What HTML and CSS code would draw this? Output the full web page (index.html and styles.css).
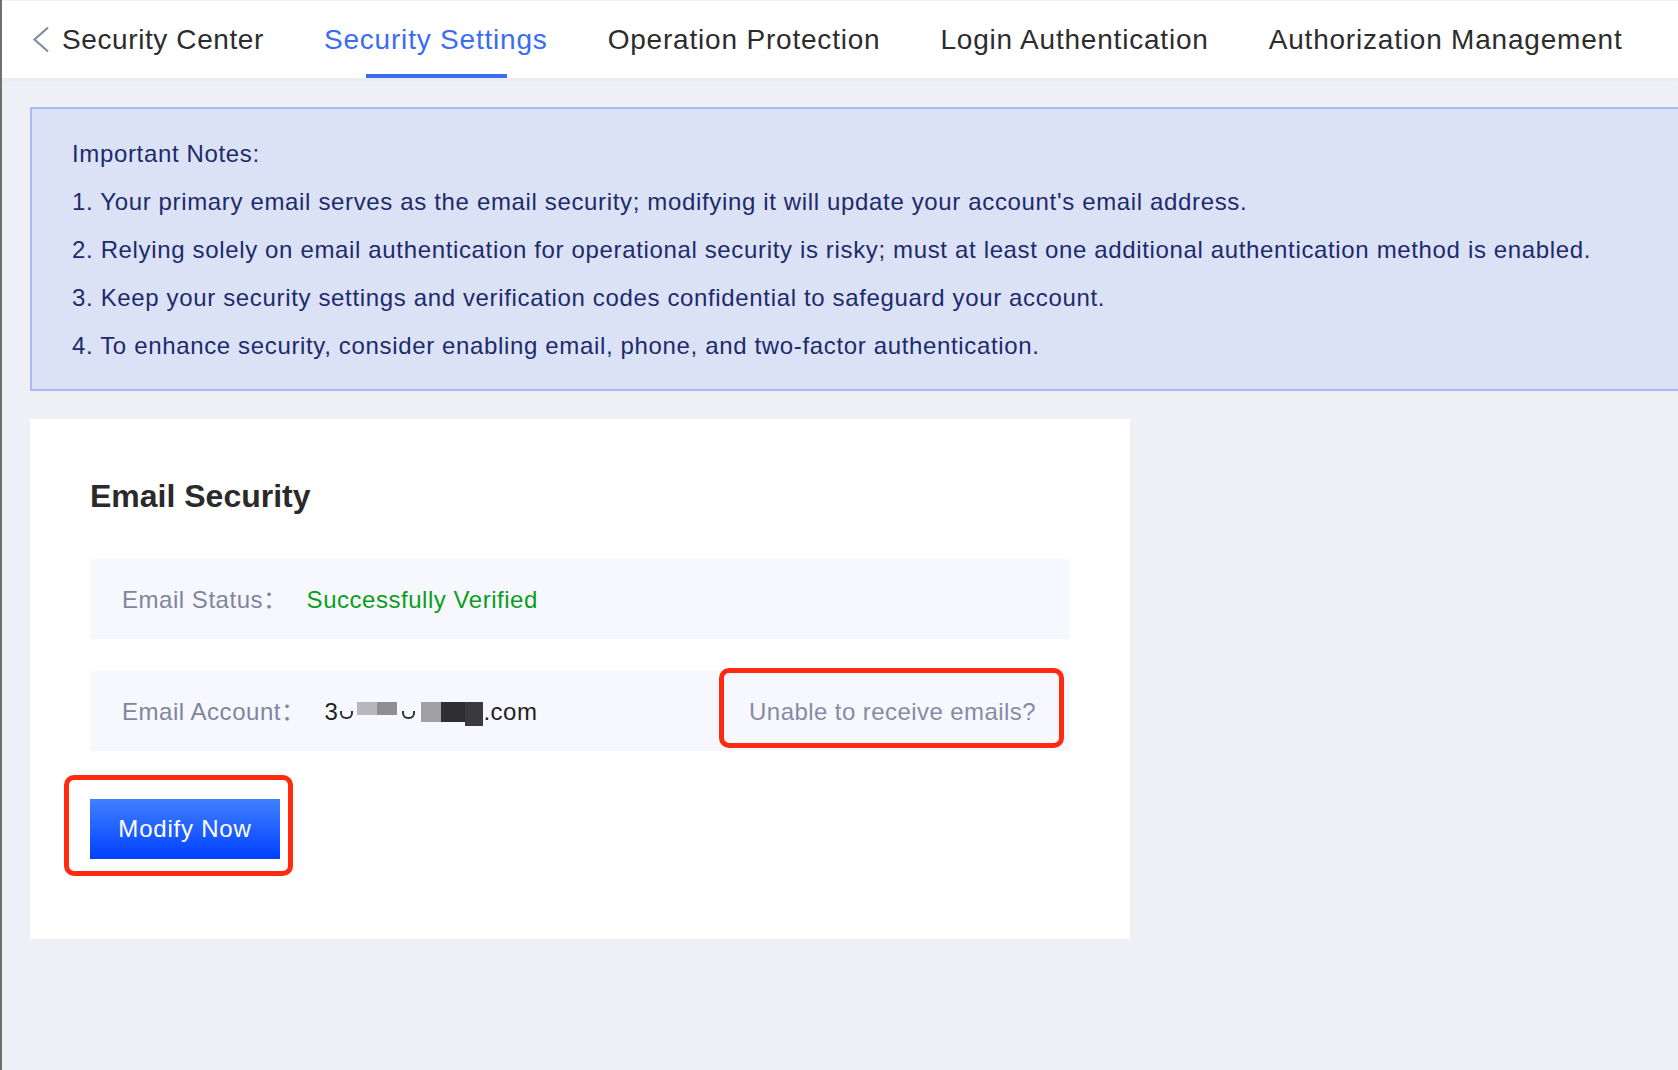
FILE: index.html
```html
<!DOCTYPE html>
<html lang="en">

<head>
    <meta charset="UTF-8">
    <title>Security Settings</title>
    <link rel="stylesheet" href="styles.css">
</head>

<body>
    <div class="top-nav">
        <a class="back-link" href="#">
            <svg class="back-icon" viewBox="0 0 18 27">
                <polyline points="16,1.5 2.5,13.5 16,25.5" />
            </svg>
            <span>Security Center</span>
        </a>
        <a class="nav-item active" href="#">Security Settings</a>
        <a class="nav-item" href="#">Operation Protection</a>
        <a class="nav-item" href="#">Login Authentication</a>
        <a class="nav-item" href="#">Authorization Management</a>
    </div>

    <div class="content">
        <div class="notice">
            <p>Important Notes:</p>
            <p>1. Your primary email serves as the email security; modifying it will update your account's email address.</p>
            <p>2. Relying solely on email authentication for operational security is risky; must at least one additional authentication method is enabled.</p>
            <p>3. Keep your security settings and verification codes confidential to safeguard your account.</p>
            <p>4. To enhance security, consider enabling email, phone, and two-factor authentication.</p>
        </div>

        <div class="card">
            <h2 class="card-title">Email Security</h2>

            <div class="info-row">
                <span class="info-label">Email Status：</span>
                <span class="info-value verified">Successfully Verified</span>
            </div>

            <div class="info-row">
                <span class="info-label">Email Account：</span>
                <span class="info-value email">3<span class="half-char"></span><span class="mask m1"></span><span class="mask m2"></span><span class="half-char gap"></span><span class="mask m3"></span><span class="mask m4"></span><span class="mask m5"></span>.com</span>
                <a class="help-link" href="#">Unable to receive emails?</a>
            </div>

            <div class="actions">
                <button class="btn-primary">Modify Now</button>
            </div>
        </div>
    </div>
</body>

</html>
```

FILE: styles.css
```css
html,
body {
    margin: 0;
    overflow: hidden;
}

body {
    font-family: "Liberation Sans", Arial, "Noto Sans CJK SC", sans-serif;
    background-color: #eef0f5;
    border-left: 2px solid #6f6f6f;
    height: 1070px;
    letter-spacing: 0.53px;
}

a {
    text-decoration: none;
}

/* top tabs */
.top-nav {
    display: flex;
    gap: 60px;
    height: 78px;
    padding-left: 30px;
    background-color: #fff;
    border-top: 1px solid #f2f2f2;
    box-sizing: border-box;
    box-shadow: 0 2px 4px rgba(0, 0, 0, 0.03);
}

.back-link {
    display: flex;
    align-items: center;
    gap: 12px;
    font-size: 28px;
    letter-spacing: 0.6px;
    color: #2c2c2c;
}

.back-icon {
    width: 18px;
    height: 27px;
    fill: none;
    stroke: #858aa3;
    stroke-width: 2.2;
}

.nav-item {
    position: relative;
    display: flex;
    align-items: center;
    font-size: 28px;
    letter-spacing: 0.8px;
    color: #2c2c2c;
}

.nav-item.active {
    color: #3a6cf4;
}

.nav-item.active::after {
    content: '';
    position: absolute;
    bottom: 0;
    left: 50%;
    width: 141px;
    height: 4px;
    margin-left: -70px;
    background-color: #3a6cf4;
}

/* page body */
.content {
    width: 1720px;
    padding: 29px 0 0 28px;
}

.notice {
    padding: 21px 40px 19px;
    background-color: #dce2f6;
    border: 2px solid #a8bbf7;
    color: #1d2b6b;
    font-size: 24px;
    letter-spacing: 0.65px;
}

.notice p {
    margin: 0;
    line-height: 48px;
}

.card {
    width: 1100px;
    margin-top: 28px;
    padding: 55px 60px 80px;
    box-sizing: border-box;
    background-color: #fff;
}

.card-title {
    margin: 0 0 41px;
    font-size: 32px;
    line-height: 44px;
    font-weight: 700;
    letter-spacing: 0;
    color: #2a2a2a;
}

.info-row {
    display: flex;
    align-items: baseline;
    height: 80px;
    padding: 27px 34px 0 32px;
    box-sizing: border-box;
    background-color: #f6f8fd;
    font-size: 24px;
    line-height: 28px;
}

.info-row + .info-row {
    margin-top: 32px;
}

.info-label {
    color: #7f859f;
    margin-right: 19px;
}

.verified {
    color: #0b9e1c;
}

.email {
    color: #222;
}

.half-char {
    display: inline-block;
    width: 9px;
    height: 6px;
    margin: 0 4px 0 2px;
    border: 2px solid #333;
    border-top: none;
    border-radius: 0 0 6px 6px;
    vertical-align: 1px;
}

.half-char.gap {
    margin: 0 6px 0 5px;
}

.mask {
    display: inline-block;
    width: 20px;
    height: 13px;
    vertical-align: 5px;
}

.m1 {
    background-color: #b8b8bc;
}

.m2 {
    background-color: #8e8e93;
}

.m3 {
    height: 20px;
    vertical-align: -2px;
    background-color: #a0a0a2;
}

.m4 {
    width: 24px;
    height: 20px;
    vertical-align: -2px;
    background-color: #2e2e32;
}

.m5 {
    width: 18px;
    height: 24px;
    vertical-align: -6px;
    background-color: #3a3a3e;
}

.help-link {
    position: relative;
    margin-left: auto;
    letter-spacing: 0.43px;
    color: #868ba5;
}

/* red review markers */
.help-link::after,
.actions::after {
    content: '';
    position: absolute;
    border: 5px solid #ff2a10;
    border-radius: 10px;
}

.help-link::after {
    top: -30px;
    right: -28px;
    bottom: -22px;
    left: -30px;
}

.actions {
    position: relative;
    display: inline-block;
    margin-top: 48px;
}

.actions::after {
    top: -24px;
    right: -13px;
    bottom: -17px;
    left: -26px;
}

.btn-primary {
    display: block;
    width: 190px;
    height: 60px;
    border: none;
    background: linear-gradient(#4180ff, #0040ff);
    color: #fff;
    font-family: inherit;
    font-size: 24px;
    letter-spacing: 0.79px;
    cursor: pointer;
}
```
